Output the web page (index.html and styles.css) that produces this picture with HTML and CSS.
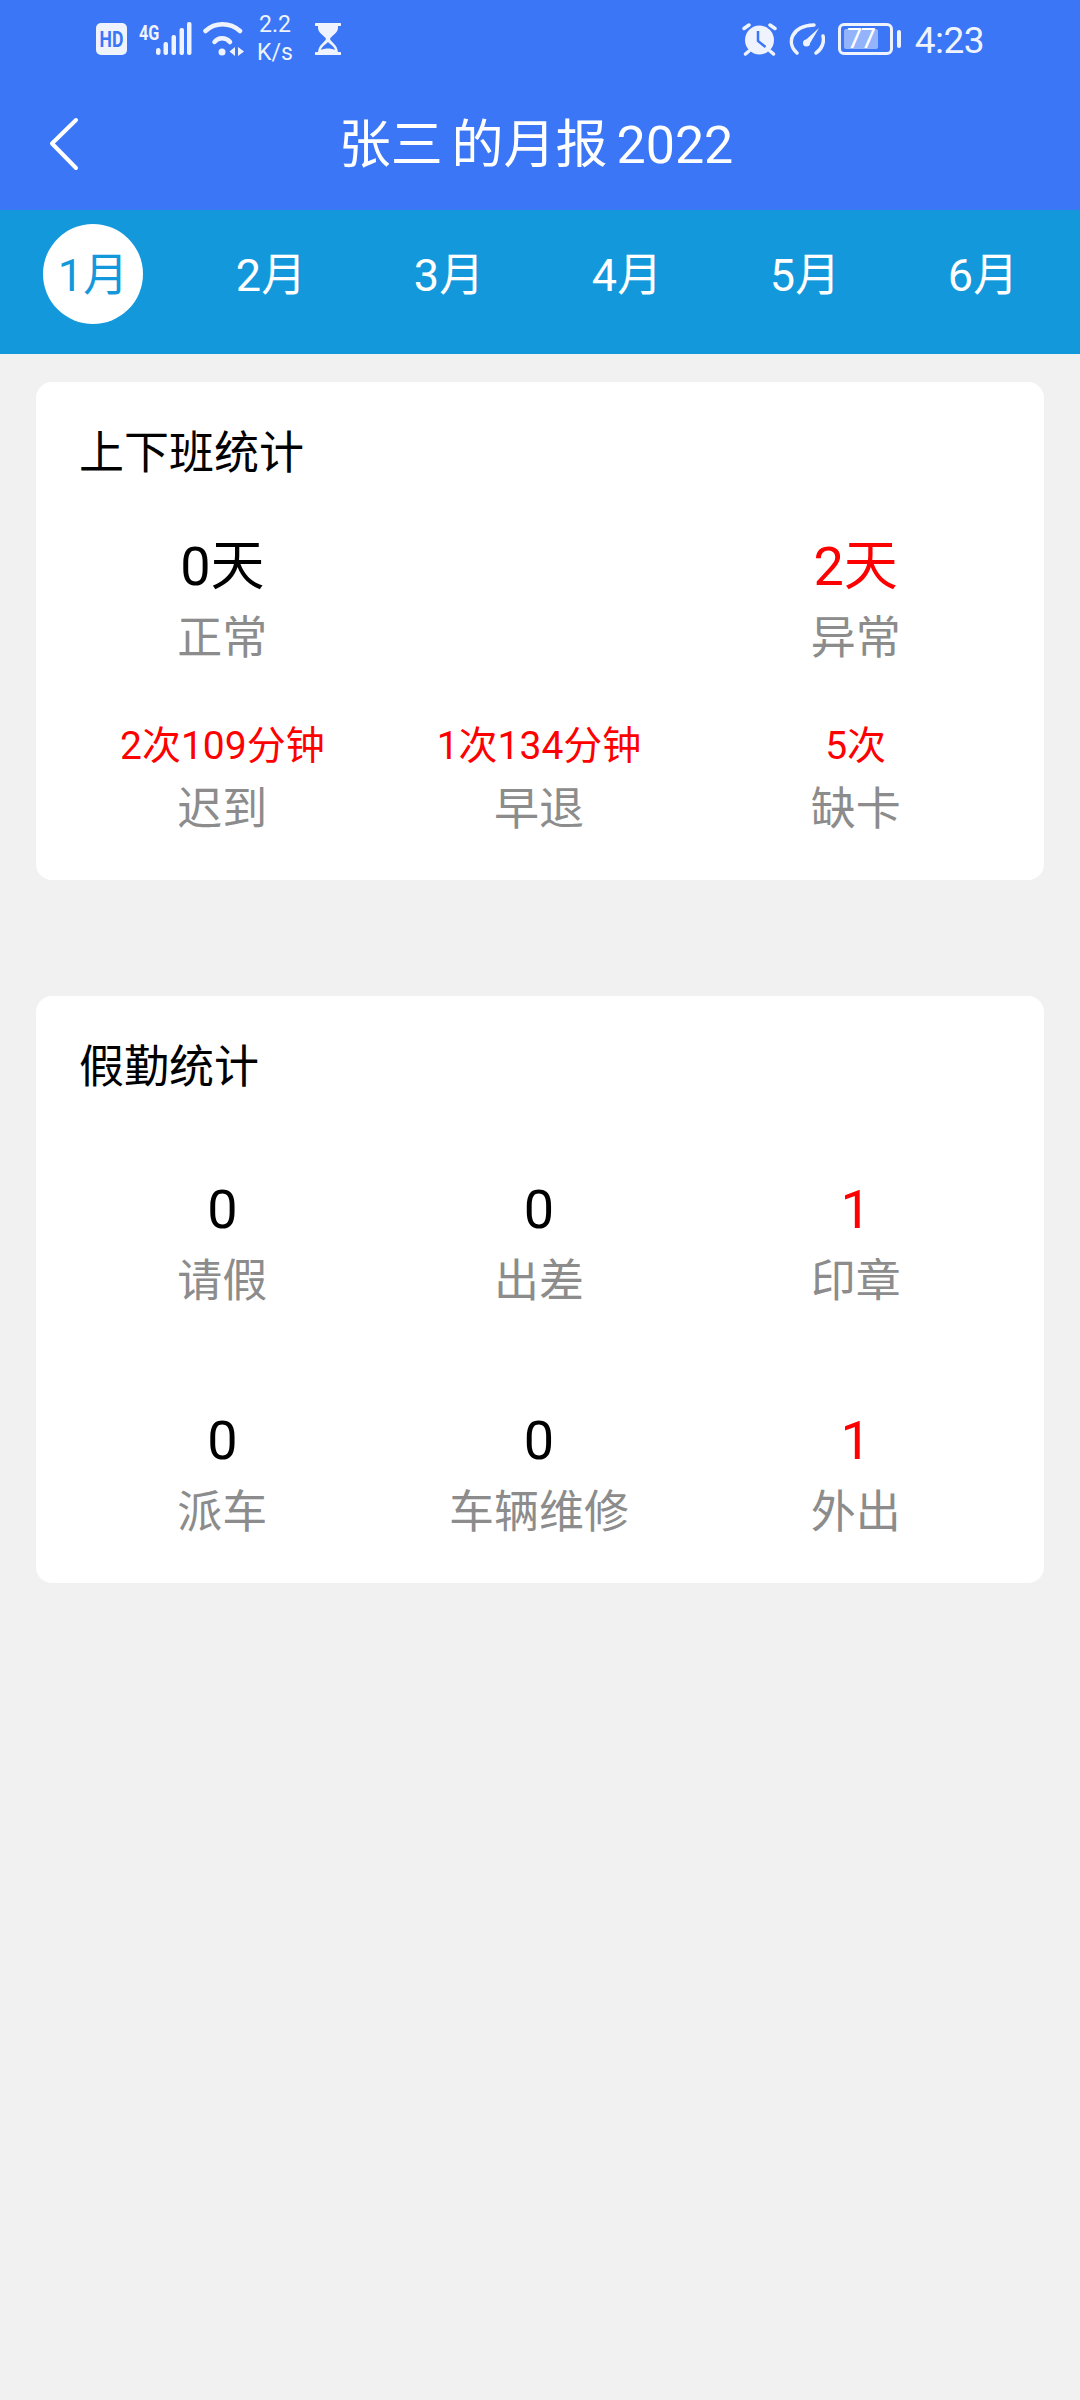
FILE: index.html
```html
<!DOCTYPE html>
<html lang="zh-CN">
<head>
    <meta charset="UTF-8">
    <title>张三 的月报 2022</title>
    <link rel="stylesheet" href="styles.css">
</head>
<body>
    <header class="top">
        <div class="status-bar">
            <div class="status-group status-left">
                <div class="icon-hd"><span>HD</span></div>
                <div class="signal">
                    <span class="net-text">4G</span>
                    <svg class="icon-signal" width="36" height="34" viewBox="0 0 36 34">
                        <rect x="0" y="26" width="4.500" height="7" rx="2.200" fill="#eef3fe"/>
                        <rect x="7.500" y="20" width="4.500" height="13" rx="2" fill="#eef3fe"/>
                        <rect x="15.500" y="13" width="4.500" height="20" rx="2" fill="#eef3fe"/>
                        <rect x="23.500" y="6" width="4.500" height="27" rx="2" fill="#eef3fe"/>
                        <rect x="31" y="0" width="4.500" height="33" rx="2" fill="#eef3fe"/>
                    </svg>
                </div>
                <svg class="icon-wifi" width="41" height="34" viewBox="0 0 41 34">
                    <path d="M2.500 9 C12 0 27 0 37 9" fill="none" stroke="#eef3fe" stroke-width="4.500" stroke-linecap="round"/>
                    <path d="M11.500 20 C15 15 23 15 27 20" fill="none" stroke="#eef3fe" stroke-width="4.500" stroke-linecap="round"/>
                    <circle cx="19" cy="30" r="3.500" fill="#eef3fe"/>
                    <path d="M32 25 L26.500 29.500 L32 34 Z M35 25 L41 29.500 L35 34 Z" fill="#eef3fe"/>
                </svg>
                <div class="speed"><span>2.2</span><span>K/s</span></div>
                <svg class="icon-glass" width="26" height="32" viewBox="0 0 26 32">
                    <path d="M1 1.500 H25 M1 30.500 H25" stroke="#eef3fe" stroke-width="3" stroke-linecap="round"/>
                    <path d="M3 2 H23 V5 C23 10 16 13 15 16 C16 19 23 22 23 30 H3 C3 22 10 19 11 16 C10 13 3 10 3 5 Z" fill="#eef3fe"/>
                    <path d="M13 19 C10.500 21.500 6.500 24 6 27 C10 25 16 25 20 27 C19.500 24 15.500 21.500 13 19 Z" fill="#3b76f6"/>
                    <path d="M7 29 C10 26.500 16 26.500 19 29 Z" fill="#eef3fe"/>
                </svg>
            </div>
            <div class="status-group status-right">
                <svg class="icon-alarm" width="35" height="33" viewBox="0 0 35 33">
                    <circle cx="17.500" cy="17" r="14.500" fill="#eef3fe"/>
                    <path d="M2 5.500 L7 2 M33 5.500 L28 2 M7 28 L3.500 31 M28 28 L31.500 31" stroke="#eef3fe" stroke-width="3.500" stroke-linecap="round"/>
                    <path d="M16 8 V18 L23.500 24" fill="none" stroke="#3b76f6" stroke-width="2.500"/>
                </svg>
                <svg class="icon-gauge" width="36" height="33" viewBox="0 0 36 33">
                    <path d="M8 30 C-3 20 2 3 25 2" fill="none" stroke="#eef3fe" stroke-width="3.500" stroke-linecap="round"/>
                    <path d="M27 30 C33 26 35.500 19 34 13" fill="none" stroke="#eef3fe" stroke-width="3.500" stroke-linecap="round"/>
                    <path d="M15.500 18 L30 5 L20 22 Z" fill="#eef3fe"/>
                    <circle cx="17.500" cy="20" r="3.500" fill="#eef3fe"/>
                </svg>
                <div class="battery">
                    <div class="battery-body">
                        <div class="battery-level">77</div>
                    </div>
                    <div class="battery-nub"></div>
                </div>
                <div class="clock">4:23</div>
            </div>
        </div>
        <div class="title-bar">
            <svg class="back-icon" width="32" height="54" viewBox="0 0 32 54">
                <path d="M28 3 L4 26.500 L28 51" fill="none" stroke="#fff" stroke-width="4" stroke-linecap="round" stroke-linejoin="round"/>
            </svg>
            <h1 class="page-title">张三 的月报 2022</h1>
        </div>
    </header>

    <nav class="month-tabs">
        <div class="month-tab active"><span>1月</span></div>
        <div class="month-tab"><span>2月</span></div>
        <div class="month-tab"><span>3月</span></div>
        <div class="month-tab"><span>4月</span></div>
        <div class="month-tab"><span>5月</span></div>
        <div class="month-tab"><span>6月</span></div>
    </nav>

    <main class="content">
        <section class="card">
            <h2 class="card-title">上下班统计</h2>
            <div class="stat-grid attendance">
                <div class="stat">
                    <div class="stat-value large">0天</div>
                    <div class="stat-label">正常</div>
                </div>
                <div class="stat stat-third">
                    <div class="stat-value large red">2天</div>
                    <div class="stat-label">异常</div>
                </div>
                <div class="stat">
                    <div class="stat-value small red">2次109分钟</div>
                    <div class="stat-label">迟到</div>
                </div>
                <div class="stat">
                    <div class="stat-value small red">1次134分钟</div>
                    <div class="stat-label">早退</div>
                </div>
                <div class="stat">
                    <div class="stat-value small red">5次</div>
                    <div class="stat-label">缺卡</div>
                </div>
            </div>
        </section>

        <section class="card">
            <h2 class="card-title">假勤统计</h2>
            <div class="stat-grid leave">
                <div class="stat">
                    <div class="stat-value large">0</div>
                    <div class="stat-label">请假</div>
                </div>
                <div class="stat">
                    <div class="stat-value large">0</div>
                    <div class="stat-label">出差</div>
                </div>
                <div class="stat">
                    <div class="stat-value large red">1</div>
                    <div class="stat-label">印章</div>
                </div>
                <div class="stat">
                    <div class="stat-value large">0</div>
                    <div class="stat-label">派车</div>
                </div>
                <div class="stat">
                    <div class="stat-value large">0</div>
                    <div class="stat-label">车辆维修</div>
                </div>
                <div class="stat">
                    <div class="stat-value large red">1</div>
                    <div class="stat-label">外出</div>
                </div>
            </div>
        </section>
    </main>
</body>
</html>
```

FILE: styles.css
```css
html, body {
    margin: 0;
    padding: 0;
}
body {
    width: 1080px;
    height: 2400px;
    overflow: hidden;
    background-color: #f1f1f1;
    font-family: Roboto, "Noto Sans CJK SC", sans-serif;
}
.top {
    background-color: #3b76f6;
    color: #fff;
}
.status-bar {
    height: 78px;
    box-sizing: border-box;
    padding: 0 96px;
    display: flex;
    justify-content: space-between;
    align-items: center;
}
.status-group {
    display: flex;
    align-items: center;
}
.status-group svg {
    display: block;
    flex: none;
}
.icon-hd {
    width: 31px;
    height: 32px;
    border-radius: 5px;
    background-color: #eef3fe;
    color: #3b76f6;
    font-size: 20px;
    font-weight: 700;
    line-height: 32px;
    text-align: center;
}
.icon-hd span {
    display: block;
    transform: scale(0.88, 1.1);
}
.signal {
    margin-left: 12px;
    width: 53px;
    height: 34px;
    display: flex;
    justify-content: flex-end;
    position: relative;
}
.net-text {
    position: absolute;
    left: 0;
    top: 0;
    font-size: 18px;
    font-weight: 700;
    line-height: 20px;
    color: #eef3fe;
    transform: scale(0.9, 1.1);
    transform-origin: left top;
}
.icon-wifi {
    margin-left: 11px;
}
.speed {
    margin-left: 13px;
    width: 36px;
    display: flex;
    flex-direction: column;
    align-items: center;
    font-size: 23px;
    line-height: 28px;
    color: #eef3fe;
}
.icon-glass {
    margin-left: 22px;
}
.icon-gauge {
    margin-left: 12px;
}
.battery {
    margin-left: 13px;
    display: flex;
    align-items: center;
}
.battery-body {
    width: 55px;
    height: 32px;
    box-sizing: border-box;
    border: 3px solid #eef3fe;
    border-radius: 6px;
    padding: 3px 12px 3px 3px;
}
.battery-level {
    height: 100%;
    background-color: #93b4fa;
    border-radius: 2px;
    font-size: 27px;
    line-height: 20px;
    letter-spacing: -1.5px;
    text-align: center;
    color: #fff;
}
.battery-nub {
    width: 4px;
    height: 18px;
    margin-left: 4px;
    background-color: #eef3fe;
    border-radius: 2px;
}
.clock {
    margin-left: 14px;
    padding-top: 2px;
    font-size: 37px;
    letter-spacing: -0.5px;
    color: #eef3fe;
}
.title-bar {
    position: relative;
    height: 132px;
    display: flex;
    align-items: center;
    justify-content: center;
}
.back-icon {
    position: absolute;
    left: 48px;
    top: 39px;
}
.page-title {
    margin: -8px 0 0 -8px;
    font-size: 52px;
    font-weight: 400;
    word-spacing: -4px;
}
.month-tabs {
    height: 144px;
    box-sizing: border-box;
    padding: 0 0 16px 4px;
    display: flex;
    align-items: center;
    background-color: #1398dc;
}
.month-tab {
    width: 178px;
    display: flex;
    justify-content: center;
    color: #fff;
    font-size: 45px;
}
.month-tab span {
    width: 100px;
    height: 100px;
    box-sizing: border-box;
    padding-bottom: 6px;
    border-radius: 50%;
    display: flex;
    align-items: center;
    justify-content: center;
}
.month-tab.active span {
    background-color: #fff;
    color: #1398dc;
}
.content {
    padding: 28px 36px 0;
    display: flex;
    flex-direction: column;
    gap: 116px;
}
.card {
    background-color: #fff;
    border-radius: 16px;
    padding: 42px 30px 40px 28px;
}
.card-title {
    margin: 0 0 0 15px;
    font-size: 45px;
    line-height: 60px;
    font-weight: 400;
    color: #000;
}
.stat-grid {
    display: grid;
    grid-template-columns: repeat(3, 1fr);
}
.attendance {
    margin-top: 49px;
    row-gap: 53px;
}
.leave {
    margin-top: 78px;
    row-gap: 95px;
}
.stat {
    text-align: center;
}
.stat-third {
    grid-column: 3;
}
.stat-value {
    color: #000;
}
.stat-value.large {
    font-size: 54px;
    line-height: 68px;
}
.stat-value.small {
    font-size: 39px;
    line-height: 48px;
    margin-bottom: 10px;
}
.stat-value.red {
    color: #f00;
}
.stat-label {
    margin-top: 8px;
    font-size: 45px;
    line-height: 60px;
    color: #8c8c8c;
}
.stat-value.small + .stat-label {
    margin-top: 0;
}
```
